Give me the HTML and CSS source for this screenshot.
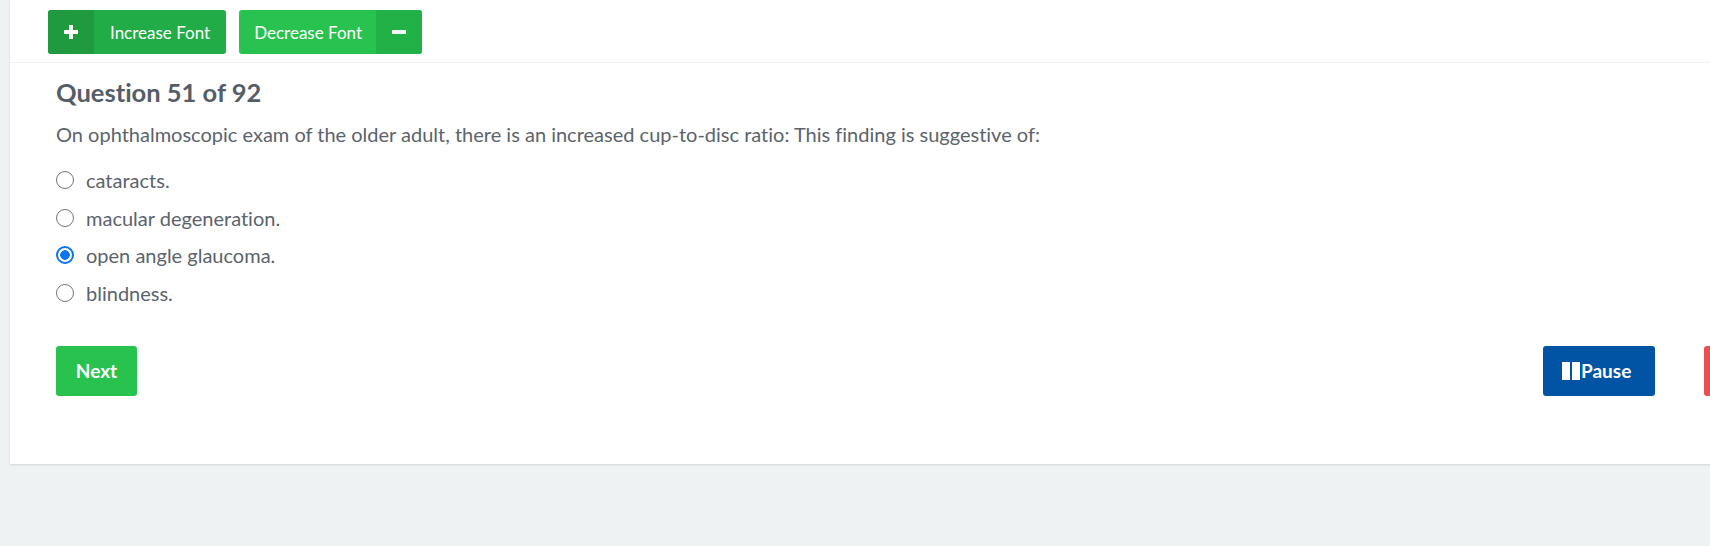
FILE: index.html
```html
<!DOCTYPE html>
<html lang="en">
<head>
<meta charset="utf-8">
<title>Question 51 of 92</title>
<link rel="stylesheet" href="styles.css">
</head>
<body>
<div class="card">
  <div class="toolbar">
    <button class="fbtn fbtn-inc" type="button">
      <span class="fbtn-icon fbtn-icon-inc">
        <svg width="14" height="14" viewBox="0 0 14 14"><path d="M5 0h4v5h5v4H9v5H5V9H0V5h5z" fill="#fff"/></svg>
      </span>
      <span class="fbtn-label">Increase Font</span>
    </button>
    <button class="fbtn fbtn-dec" type="button">
      <span class="fbtn-label fbtn-label-dec">Decrease Font</span>
      <span class="fbtn-icon fbtn-icon-dec">
        <svg width="14" height="14" viewBox="0 0 14 14"><rect x="0" y="5" width="14" height="4" fill="#fff"/></svg>
      </span>
    </button>
  </div>
  <div class="content">
    <h2 class="qtitle">Question 51 of 92</h2>
    <p class="qtext">On ophthalmoscopic exam of the older adult, there is an increased cup-to-disc ratio: This finding is suggestive of:</p>
    <ul class="options">
      <li class="option"><label class="opt-label"><input class="radio" type="radio" name="ans"><span>cataracts.</span></label></li>
      <li class="option"><label class="opt-label"><input class="radio" type="radio" name="ans"><span>macular degeneration.</span></label></li>
      <li class="option"><label class="opt-label"><input class="radio" type="radio" name="ans" checked><span>open angle glaucoma.</span></label></li>
      <li class="option"><label class="opt-label"><input class="radio" type="radio" name="ans"><span>blindness.</span></label></li>
    </ul>
    <div class="actions">
      <button class="abtn abtn-next" type="button">Next</button>
      <div class="actions-right">
        <button class="abtn abtn-pause" type="button">
          <svg class="pause-icon" width="19" height="18" viewBox="0 0 19 18"><rect x="0" y="0" width="8" height="18" fill="#fff"/><rect x="10" y="0" width="8" height="18" fill="#fff"/></svg>Pause</button>
        <button class="abtn abtn-end" type="button" aria-label="End"></button>
      </div>
    </div>
  </div>
</div>
</body>
</html>
```
FILE: styles.css
```css
html, body {
  margin: 0;
  padding: 0;
}
body {
  background: #eef2f3;
  font-family: "Lato", "Liberation Sans", sans-serif;
  font-variant-ligatures: none;
  color: #5b636b;
  overflow: hidden;
  width: 1710px;
  height: 546px;
}
.card {
  margin-left: 10px;
  width: 1800px;
  height: 464px;
  background: #fff;
  box-shadow: 0 1px 2px rgba(0, 0, 0, 0.12);
  box-sizing: border-box;
}
.toolbar {
  display: flex;
  gap: 13px;
  padding: 10px 0 8px 38px;
  border-bottom: 1px solid #f1f2f3;
}
.fbtn {
  display: flex;
  align-items: stretch;
  height: 44px;
  padding: 0;
  border: 0;
  border-radius: 3px;
  overflow: hidden;
  font-family: inherit;
  font-variant-ligatures: none;
  font-size: 17px;
  color: #fff;
  cursor: pointer;
}
.fbtn-inc { background: #22ac47; }
.fbtn-dec { background: #28c24e; }
.fbtn-icon {
  width: 46px;
  display: flex;
  align-items: center;
  justify-content: center;
}
.fbtn-icon-inc { background: #1f9a3e; }
.fbtn-icon-dec { background: #22b146; }
.fbtn-label {
  display: flex;
  align-items: center;
  padding: 0 16px;
}
.fbtn-label-dec {
  padding: 0 14px 0 15px;
}
.content {
  padding-left: 46px;
}
.qtitle {
  margin: 12px 0 0;
  font-size: 25.5px;
  line-height: 34px;
  font-weight: 700;
  color: #555e66;
}
.qtext {
  margin: 12px 0 0;
  font-size: 20px;
  line-height: 26px;
}
.options {
  list-style: none;
  margin: 14px 0 0;
  padding: 0;
}
.option {
  height: 37.7px;
  display: flex;
  align-items: center;
}
.opt-label {
  display: flex;
  align-items: center;
  gap: 12px;
  font-size: 20px;
}
.radio {
  appearance: none;
  -webkit-appearance: none;
  margin: 0;
  width: 18px;
  height: 18px;
  border: 1.5px solid #757575;
  border-radius: 50%;
  box-sizing: border-box;
  background: #fff;
}
.radio:checked {
  border: 2px solid #0a75f0;
  background: radial-gradient(circle, #0a75f0 0 4.5px, #fff 5px);
}
.actions {
  display: flex;
  justify-content: space-between;
  margin-top: 34px;
  width: 1748px;
}
.actions-right {
  display: flex;
  gap: 49px;
}
.abtn {
  height: 50px;
  border: 0;
  border-radius: 3px;
  color: #fff;
  font-family: inherit;
  font-variant-ligatures: none;
  font-size: 19px;
  font-weight: 700;
  padding: 0 20px;
  display: flex;
  align-items: center;
  cursor: pointer;
}
.abtn-next {
  background: #28c24e;
  width: 81px;
  justify-content: center;
}
.abtn-pause {
  background: #0054a3;
  width: 112px;
  padding: 0 19px;
}
.pause-icon { flex: none; }
.abtn-end {
  background: #e9514f;
  width: 100px;
}
```
